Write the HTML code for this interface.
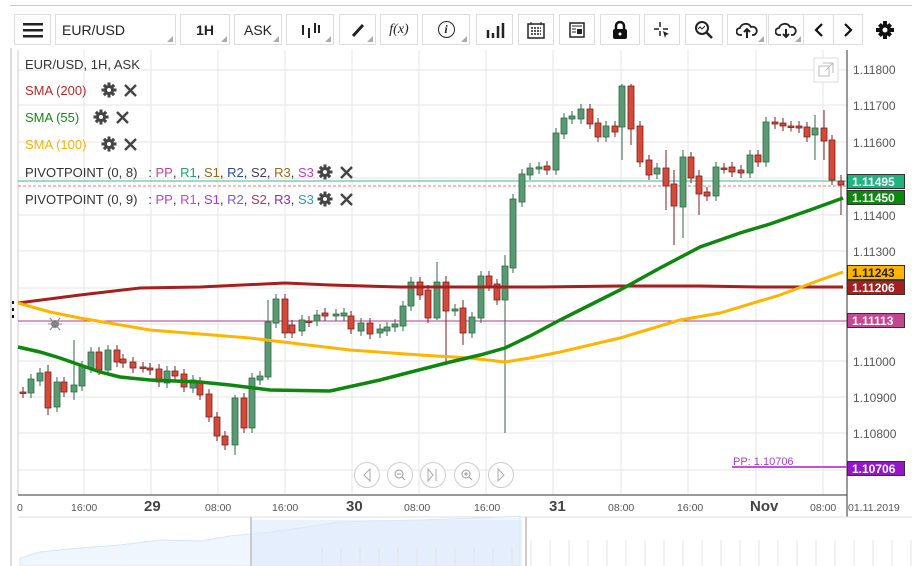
<!DOCTYPE html>
<html><head><meta charset="utf-8"><style>
*{margin:0;padding:0;box-sizing:border-box}
body{width:912px;height:566px;overflow:hidden;background:#fff;font-family:"Liberation Sans",sans-serif;position:relative}
.tb{position:absolute;top:14px;height:31px;border:1px solid #ddd;background:#fff;display:flex;align-items:center;justify-content:center;font-size:14px;color:#222}
.tri:after{content:"";position:absolute;right:2px;bottom:2px;border-left:6px solid transparent;border-bottom:6px solid #aaa}
.lg{position:absolute;left:25px;font-size:13px;color:#333;white-space:nowrap;display:flex;align-items:center;height:16px}
.ic{display:inline-flex;gap:6px;margin-left:10px;align-items:center}
.pl{position:absolute;left:847px;width:58px;height:15px;font-size:12px;font-weight:bold;color:#fff;padding-left:4px;line-height:15px;border:1px solid #333}
.ax{position:absolute;font-size:12px;color:#555}
.tx{position:absolute;font-size:10.5px;color:#555}
</style></head><body>
<svg width="0" height="0" style="position:absolute"><defs>
<g id="gear"><g fill="#444"><circle cx="8" cy="8" r="5"/><path d="M6.5 0.5h3v3h-3zM6.5 12.5h3v3h-3zM0.5 6.5h3v3h-3zM12.5 6.5h3v3h-3z"/><path d="M1.8 4l2.2-2.2 2.2 2.2-2.2 2.2zM9.8 12l2.2-2.2 2.2 2.2-2.2 2.2zM12 1.8l2.2 2.2-2.2 2.2-2.2-2.2zM4 9.8l2.2 2.2-2.2 2.2-2.2-2.2z"/></g><circle cx="8" cy="8" r="2" fill="#fff"/></g>
<g id="xx"><path d="M2 2l11 11M13 2L2 13" stroke="#444" stroke-width="2.4"/></g>
</defs></svg>
<div style="position:absolute;left:10px;top:5px;width:902px;height:1px;background:#ccc"></div>
<div class="tb" style="left:14px;width:37px"><svg width="20" height="16"><rect y="1" width="20" height="2.5" fill="#222"/><rect y="7" width="20" height="2.5" fill="#222"/><rect y="13" width="20" height="2.5" fill="#222"/></svg></div>
<div class="tb tri" style="left:55px;width:121px;justify-content:flex-start;padding-left:6px">EUR/USD</div>
<div class="tb tri" style="left:180px;width:50px;font-weight:bold">1H</div>
<div class="tb tri" style="left:234px;width:48px">ASK</div>
<div class="tb tri" style="left:286px;width:48px"><svg width="20" height="16"><path d="M3 3v10M9 6v10M15 1v10M19 3v8" stroke="#222" stroke-width="2"/></svg></div>
<div class="tb tri" style="left:339px;width:37px"><svg width="16" height="16"><path d="M3 14L13 3" stroke="#222" stroke-width="3"/></svg></div>
<div class="tb" style="left:380px;width:38px;font-family:'Liberation Serif',serif;font-style:italic;font-size:14px">f(x)</div>
<div class="tb tri" style="left:422px;width:48px;font-family:'Liberation Serif',serif;font-style:italic;font-weight:bold"><span style="border:1.5px solid #222;border-radius:50%;width:17px;height:17px;display:flex;align-items:center;justify-content:center;font-size:12px">i</span></div>
<div class="tb" style="left:476px;width:37px"><svg width="20" height="16"><path d="M3 8v8M8 11v5M13 4v12M18 1v15" stroke="#222" stroke-width="2.5"/></svg></div>
<div class="tb" style="left:518px;width:36px"><svg width="20" height="18"><rect x="2" y="3" width="16" height="14" fill="none" stroke="#222" stroke-width="1.5"/><path d="M5 7h10M5 10h10M5 13h10" stroke="#222" stroke-width="1.5" stroke-dasharray="2 1"/><path d="M5 1v3M15 1v3" stroke="#222"/></svg></div>
<div class="tb" style="left:559px;width:36px"><svg width="18" height="18"><rect x="2" y="2" width="14" height="14" fill="none" stroke="#222" stroke-width="1.5"/><path d="M4 5h10M4 8h4M4 11h4" stroke="#222"/><rect x="9" y="8" width="5" height="5" fill="#222"/></svg></div>
<div class="tb" style="left:600px;width:40px"><svg width="16" height="20"><path d="M4 9V6a4 4 0 0 1 8 0v3" fill="none" stroke="#111" stroke-width="2.5"/><rect x="1" y="9" width="14" height="10" rx="2" fill="#111"/><circle cx="8" cy="14" r="1.5" fill="#fff"/></svg></div>
<div class="tb" style="left:644px;width:36px"><svg width="20" height="20"><path d="M8 2v5M8 11v5M2 9h5M11 9h5" stroke="#222" stroke-width="1.5"/><path d="M11 11l6 3-3 1-1 3z" fill="#222"/></svg></div>
<div class="tb" style="left:685px;width:38px"><svg width="20" height="20"><circle cx="8" cy="8" r="6" fill="none" stroke="#222" stroke-width="2"/><path d="M12 12l6 6" stroke="#222" stroke-width="2.5"/><path d="M4 9l2-2 2 2 3-3" fill="none" stroke="#222"/></svg></div>
<div class="tb tri" style="left:727px;width:40px"><svg width="22" height="18"><path d="M6 14H4a3.5 3.5 0 0 1 0-7 6 6 0 0 1 11-1 4 4 0 0 1 3 8h-2" fill="none" stroke="#222" stroke-width="1.8"/><path d="M11 17V9M8 11l3-3 3 3" fill="none" stroke="#222" stroke-width="2"/></svg></div>
<div class="tb tri" style="left:768px;width:36px"><svg width="22" height="18"><path d="M6 14H4a3.5 3.5 0 0 1 0-7 6 6 0 0 1 11-1 4 4 0 0 1 3 8h-2" fill="none" stroke="#222" stroke-width="1.8"/><path d="M11 8v8M8 13l3 3 3-3" fill="none" stroke="#222" stroke-width="2"/></svg></div>
<div class="tb" style="left:803px;width:31px"><svg width="10" height="16"><path d="M8 2L2 8l6 6" fill="none" stroke="#111" stroke-width="2.2"/></svg></div>
<div class="tb" style="left:833px;width:30px"><svg width="10" height="16"><path d="M2 2l6 6-6 6" fill="none" stroke="#111" stroke-width="2.2"/></svg></div>
<div style="position:absolute;left:875px;top:20px"><svg width="20" height="20" viewBox="0 0 20 20"><g fill="#111"><circle cx="10" cy="10" r="6"/><path d="M8 1h4v4H8zM8 15h4v4H8zM1 8h4v4H1zM15 8h4v4h-4z"/><path d="M3 5.8L5.8 3 8.6 5.8 5.8 8.6zM11.4 14.2l2.8-2.8 2.8 2.8-2.8 2.8zM14.2 3L17 5.8 14.2 8.6 11.4 5.8zM5.8 11.4l2.8 2.8L5.8 17 3 14.2z"/></g><circle cx="10" cy="10" r="2.5" fill="#fff"/></svg></div>

<div style="position:absolute;left:10px;top:48px;width:2px;height:518px;background:#ddd"></div>
<svg id="ch" width="912" height="566" style="position:absolute;left:0;top:0"></svg>

<div class="lg" style="top:56px">EUR/USD, 1H, ASK</div>
<div class="lg" style="top:82px;color:#b22a2a">SMA (200)<span class="ic" style="margin-left:15px"><svg width="16" height="16"><use href="#gear"/></svg><svg width="15" height="15"><use href="#xx"/></svg></span></div>
<div class="lg" style="top:109px;color:#128a12">SMA (55)<span class="ic" style="margin-left:14px"><svg width="16" height="16"><use href="#gear"/></svg><svg width="15" height="15"><use href="#xx"/></svg></span></div>
<div class="lg" style="top:136px;color:#f5b400">SMA (100)<span class="ic" style="margin-left:15px"><svg width="16" height="16"><use href="#gear"/></svg><svg width="15" height="15"><use href="#xx"/></svg></span></div>
<div class="lg" style="top:164px">PIVOTPOINT (0, 8) &nbsp;&nbsp;:&nbsp;<span style="color:#c2449a">PP</span>,&nbsp;<span style="color:#1fa078">R1</span>,&nbsp;<span style="color:#8b6a1a">S1</span>,&nbsp;<span style="color:#2a4aa0">R2</span>,&nbsp;<span style="color:#4a3a4a">S2</span>,&nbsp;<span style="color:#9a6a1a">R3</span>,&nbsp;<span style="color:#c23ad0">S3</span><span class="ic" style="margin-left:3px"><svg width="16" height="16"><use href="#gear"/></svg><svg width="15" height="15"><use href="#xx"/></svg></span></div>
<div class="lg" style="top:191px">PIVOTPOINT (0, 9) &nbsp;&nbsp;:&nbsp;<span style="color:#c23ad0">PP</span>,&nbsp;<span style="color:#e03ad0">R1</span>,&nbsp;<span style="color:#a03ae0">S1</span>,&nbsp;<span style="color:#7a5ad0">R2</span>,&nbsp;<span style="color:#c2305a">S2</span>,&nbsp;<span style="color:#8a2ab0">R3</span>,&nbsp;<span style="color:#2a9ac0">S3</span><span class="ic" style="margin-left:3px"><svg width="16" height="16"><use href="#gear"/></svg><svg width="15" height="15"><use href="#xx"/></svg></span></div>

<div class="ax" style="left:853px;top:63px">1.11800</div>
<div class="ax" style="left:853px;top:99px">1.11700</div>
<div class="ax" style="left:853px;top:136px">1.11600</div>
<div class="ax" style="left:853px;top:209px">1.11400</div>
<div class="ax" style="left:853px;top:245px">1.11300</div>
<div class="ax" style="left:853px;top:355px">1.11000</div>
<div class="ax" style="left:853px;top:391px">1.10900</div>
<div class="ax" style="left:853px;top:427px">1.10800</div>
<div class="pl" style="top:174px;background:#1fb37f">1.11495</div>
<div class="pl" style="top:190px;background:#0d870d">1.11450</div>
<div class="pl" style="top:265px;background:#ffb400;color:#222">1.11243</div>
<div class="pl" style="top:280px;background:#a51f1f">1.11206</div>
<div class="pl" style="top:313px;background:#c54693">1.11113</div>
<div class="pl" style="top:461px;background:#9516c4">1.10706</div>
<div style="position:absolute;left:733px;top:456px;font-size:11px;color:#b03ad0">PP: 1.10706</div>

<div class="tx" style="left:17px;top:502px">0</div>
<div class="tx" style="left:71px;top:502px">16:00</div>
<div class="tx" style="left:144px;top:498px;font-size:15px;font-weight:bold;color:#444">29</div>
<div class="tx" style="left:205px;top:502px">08:00</div>
<div class="tx" style="left:272px;top:502px">16:00</div>
<div class="tx" style="left:346px;top:498px;font-size:15px;font-weight:bold;color:#444">30</div>
<div class="tx" style="left:404px;top:502px">08:00</div>
<div class="tx" style="left:474px;top:502px">16:00</div>
<div class="tx" style="left:549px;top:498px;font-size:15px;font-weight:bold;color:#444">31</div>
<div class="tx" style="left:608px;top:502px">08:00</div>
<div class="tx" style="left:677px;top:502px">16:00</div>
<div class="tx" style="left:750px;top:498px;font-size:15px;font-weight:bold;color:#444">Nov</div>
<div class="tx" style="left:810px;top:502px">08:00</div>
<div class="tx" style="left:848px;top:502px">01.11.2019</div>

<script>
const s=document.getElementById('ch');let h='';
[84,151,218,285,352,419,486,553,621,688,756,823].forEach(x=>h+=`<line x1="${x}" y1="50" x2="${x}" y2="495" stroke="#e6e6e6"/>`);
[70,105,142,178,215,251,288,324,361,397,433,470].forEach(y=>h+=`<line x1="18" y1="${y}" x2="847" y2="${y}" stroke="#e6e6e6"/>`);
h+=`<line x1="18" y1="50" x2="18" y2="495" stroke="#ccc"/><line x1="847" y1="50" x2="847" y2="517" stroke="#333"/><line x1="18" y1="495" x2="847" y2="495" stroke="#333"/>`;
h+=`<line x1="18" y1="181" x2="847" y2="181" stroke="#3bb88a"/><line x1="18" y1="186" x2="847" y2="186" stroke="#e77" stroke-dasharray="3 2"/><line x1="18" y1="321" x2="847" y2="321" stroke="#b43a8a"/><line x1="732" y1="467" x2="847" y2="467" stroke="#c050e0" stroke-width="2"/>`;
const C=[[23,392,393],[31,393,379],[40,381,373],[48,372,408],[57,407,382],[64,382,392],[74,392,385],[82,386,366],[91,368,352],[99,352,370],[108,370,350],[117,350,362],[123,359,363],[133,362,368],[143,367,367.5],[150,368,370],[159,369,382],[167,383,371],[175,371,376],[184,374,387],[193,388,380],[200,382,395],[209,394,417],[217,417,436],[225,436,445],[235,445,398],[244,398,428],[252,428,378],[260,380,376],[268,377,322],[276,323,299],[285,299,333],[292,325,333],[302,331,320],[309,321,322],[317,321,315],[325,313,316],[336,316,314],[344,316,313],[351,316,329],[361,331,323],[370,323,334],[380,333,329],[387,331,327],[395,327,324],[403,326,306],[411,306,282],[420,282,295],[428,290,318],[437,318,282],[446,282,311],[455,311,309],[463,308,333],[472,333,317],[481,318,276],[489,276,286],[497,284,300],[505,300,266],[513,268,199],[522,202,174],[530,175,168],[539,169,167],[547,166,170],[556,170,133],[564,134,118],[572,119,116],[581,119,109],[590,109,124],[598,123,137],[606,137,126],[615,126,132],[622,127,86],[631,86,129],[640,126,162],[649,160,175],[657,174,168],[666,168,186],[674,184,206],[683,207,157],[691,157,178],[699,176,194],[707,192,196],[716,196,167],[724,168,168.5],[732,167,172],[741,170,173],[750,173,155],[758,155,162],[766,162,122],[775,122,124],[783,123,126],[791,126,126.5],[799,126,128],[807,127,137],[815,135,128],[824,128,141],[832,140,180],[841,181,185]];
const W={505:[255,433],622:[84,160],631:[84,145],674:[170,245],683:[150,238],666:[150,210],699:[170,215],48:[365,415],74:[340,400],235:[395,455],841:[175,215],824:[110,160],815:[115,160],437:[262,320],446:[276,365],463:[300,345],268:[300,380]};
C.forEach(([x,o,c])=>{const up=c<o,t=Math.min(o,c),b=Math.max(o,c);let hi=t-5,lo=b+5;if(W[x]){hi=W[x][0];lo=W[x][1];}
const col=up?'#5a9a73':'#d34a3a',dk=up?'#2f6a45':'#7a2020';
h+=`<line x1="${x}" y1="${hi}" x2="${x}" y2="${lo}" stroke="${dk}"/><rect x="${x-3}" y="${t}" width="6" height="${Math.max(b-t,1.5)}" fill="${col}" stroke="${dk}" stroke-width="0.8"/>`;});
h+=`<polyline fill="none" stroke="#a51f1f" stroke-width="3" points="18,303 80,295 140,288 200,287 285,283 330,285 400,287 470,287 540,287 620,286 700,286 760,287 843,287"/>`;
h+=`<polyline fill="none" stroke="#ffb400" stroke-width="3" points="18,303 50,312 80,318 150,330 250,338 350,350 420,355 470,358 505,362 530,358 560,352 620,338 680,320 720,313 780,295 820,280 843,272"/>`;
h+=`<polyline fill="none" stroke="#0d870d" stroke-width="3.5" points="18,347 40,352 60,358 80,365 100,372 120,377 150,380 200,382 230,385 270,390 330,391 380,380 450,362 480,355 505,348 530,336 560,320 590,305 620,290 660,268 700,247 740,233 770,224 810,210 843,198"/>`;
[367,400,433,467,501].forEach(x=>h+=`<circle cx="${x}" cy="475" r="12.5" fill="#fff" stroke="#ccc"/>`);
h+=`<path d="M370 469l-6 6 6 6z" fill="none" stroke="#aaa"/><circle cx="399" cy="474" r="4" fill="none" stroke="#999"/><path d="M402 477l3 3M397 474h4" stroke="#999"/><path d="M428 469l5 6-5 6zM436 469v12" fill="none" stroke="#aaa"/><circle cx="466" cy="474" r="4" fill="none" stroke="#999"/><path d="M469 477l3 3M464 474h4M466 472v4" stroke="#999"/><path d="M498 469l6 6-6 6z" fill="none" stroke="#aaa"/>`;
h+=`<rect x="814" y="58" width="24" height="24" fill="#fff" stroke="#ddd"/><rect x="819" y="66" width="10" height="10" fill="none" stroke="#bbb"/><path d="M823 63h10v10M826 70l7-7" fill="none" stroke="#bbb"/>`;
h+=`<line x1="18" y1="517" x2="912" y2="517" stroke="#ddd"/>`;
h+=`<path d="M20 566V558 L40 552 L80 548 L120 545 L160 540 L200 541 L230 536 L270 532 L300 528 L340 522 L370 521 L420 520 L480 518 L500 517 L520 516 V566Z" fill="#f0f6fd" stroke="#d6e6f8"/>`;
h+=`<rect x="250" y="520" width="272" height="46" fill="#dce9fb" opacity="0.6"/><line x1="251" y1="517" x2="251" y2="566" stroke="#ccc" stroke-width="2"/><line x1="526" y1="517" x2="526" y2="566" stroke="#ccc" stroke-width="2"/>`;
for(let x=322;x<912;x+=19)h+=`<line x1="${x}" y1="${x<526?548:540}" x2="${x}" y2="566" stroke="#e4e4e4"/>`;
h+=`<g stroke="#888" fill="#777"><circle cx="55" cy="324" r="3.5"/><path d="M50 318l10 12M60 318l-10 12M48 324h14" fill="none"/></g><path d="M13 301v3M13 308v3M13 315v3" stroke="#111" stroke-width="2"/>`;
s.innerHTML=h;
</script>
</body></html>
